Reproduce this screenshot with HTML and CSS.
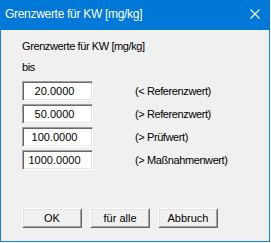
FILE: index.html
```html
<!DOCTYPE html>
<html lang="de">
<head>
    <meta charset="UTF-8">
    <title>Grenzwerte für KW [mg/kg]</title>
    <link rel="stylesheet" href="styles.css">
</head>
<body>
    <div class="window">
        <div class="titlebar">
            <span class="title">Grenzwerte für KW [mg/kg]</span>
            <svg class="close" width="10" height="10" viewBox="0 0 10 10">
                <path d="M0.5 0.5 L9.5 9.5 M9.5 0.5 L0.5 9.5" stroke="#fff" stroke-width="1.1" fill="none"/>
            </svg>
        </div>
        <div class="content">
            <div class="heading">Grenzwerte für KW [mg/kg]</div>
            <div class="sub">bis</div>
            <div class="rows">
                <div class="row">
                    <input type="text" class="field" value="20.0000">
                    <span class="label">(&lt; Referenzwert)</span>
                </div>
                <div class="row">
                    <input type="text" class="field" value="50.0000">
                    <span class="label">(&gt; Referenzwert)</span>
                </div>
                <div class="row">
                    <input type="text" class="field" value="100.0000">
                    <span class="label">(&gt; Prüfwert)</span>
                </div>
                <div class="row">
                    <input type="text" class="field" value="1000.0000">
                    <span class="label">(&gt; Maßnahmenwert)</span>
                </div>
            </div>
            <div class="buttons">
                <button class="btn">OK</button>
                <button class="btn">für alle</button>
                <button class="btn">Abbruch</button>
            </div>
        </div>
    </div>
</body>
</html>
```

FILE: styles.css
```css
body {
    margin: 0;
    background: #ffffff;
    font-family: "Liberation Sans", Arial, sans-serif;
    font-size: 11px;
    color: #000;
}

.window {
    width: 270px;
    height: 242px;
    box-sizing: border-box;
    border: 1px solid #1a7fd4;
    border-top: none;
    background: #f0f0f0;
    display: flex;
    flex-direction: column;
}

.titlebar {
    height: 30px;
    flex: none;
    background: #0078d7;
    margin: 0 -1px;
    display: flex;
    align-items: center;
    padding: 0 10px 0 5px;
    color: #fff;
}

.title {
    flex: 1;
    font-size: 12px;
    line-height: 16px;
    letter-spacing: -0.3px;
    padding-bottom: 2px;
}

.close {
    display: block;
    margin-bottom: 3px;
}

.content {
    padding: 10px 0 0 21px;
    display: flex;
    flex-direction: column;
    letter-spacing: -0.4px;
}

.heading {
    line-height: 13px;
}

.sub {
    line-height: 13px;
    margin-top: 8px;
}

.rows {
    margin-top: 7px;
    display: flex;
    flex-direction: column;
    gap: 3px;
}

.row {
    display: flex;
    align-items: center;
}

.field {
    width: 71px;
    height: 20px;
    box-sizing: border-box;
    margin: 0;
    padding: 0;
    border-style: solid;
    border-width: 1px;
    border-color: #a0a0a0 #ffffff #ffffff #a0a0a0;
    box-shadow: inset 1px 1px #696969, inset -1px -1px #e3e3e3;
    background: #fff;
    font-family: "Liberation Sans", Arial, sans-serif;
    font-size: 11px;
    letter-spacing: 0;
    text-align: center;
    padding-right: 6px;
    color: #000;
    outline: none;
}

.label {
    margin-left: 42px;
    line-height: 13px;
}

.buttons {
    margin-top: 38px;
    display: flex;
    gap: 8px;
}

.btn {
    width: 60px;
    height: 20px;
    box-sizing: border-box;
    margin: 0;
    padding: 0;
    border-style: solid;
    border-width: 1px;
    border-color: #ffffff #696969 #696969 #ffffff;
    box-shadow: inset 1px 1px #e3e3e3, inset -1px -1px #a0a0a0;
    background: #f0f0f0;
    font-family: "Liberation Sans", Arial, sans-serif;
    font-size: 11px;
    letter-spacing: 0;
    color: #000;
}
```
